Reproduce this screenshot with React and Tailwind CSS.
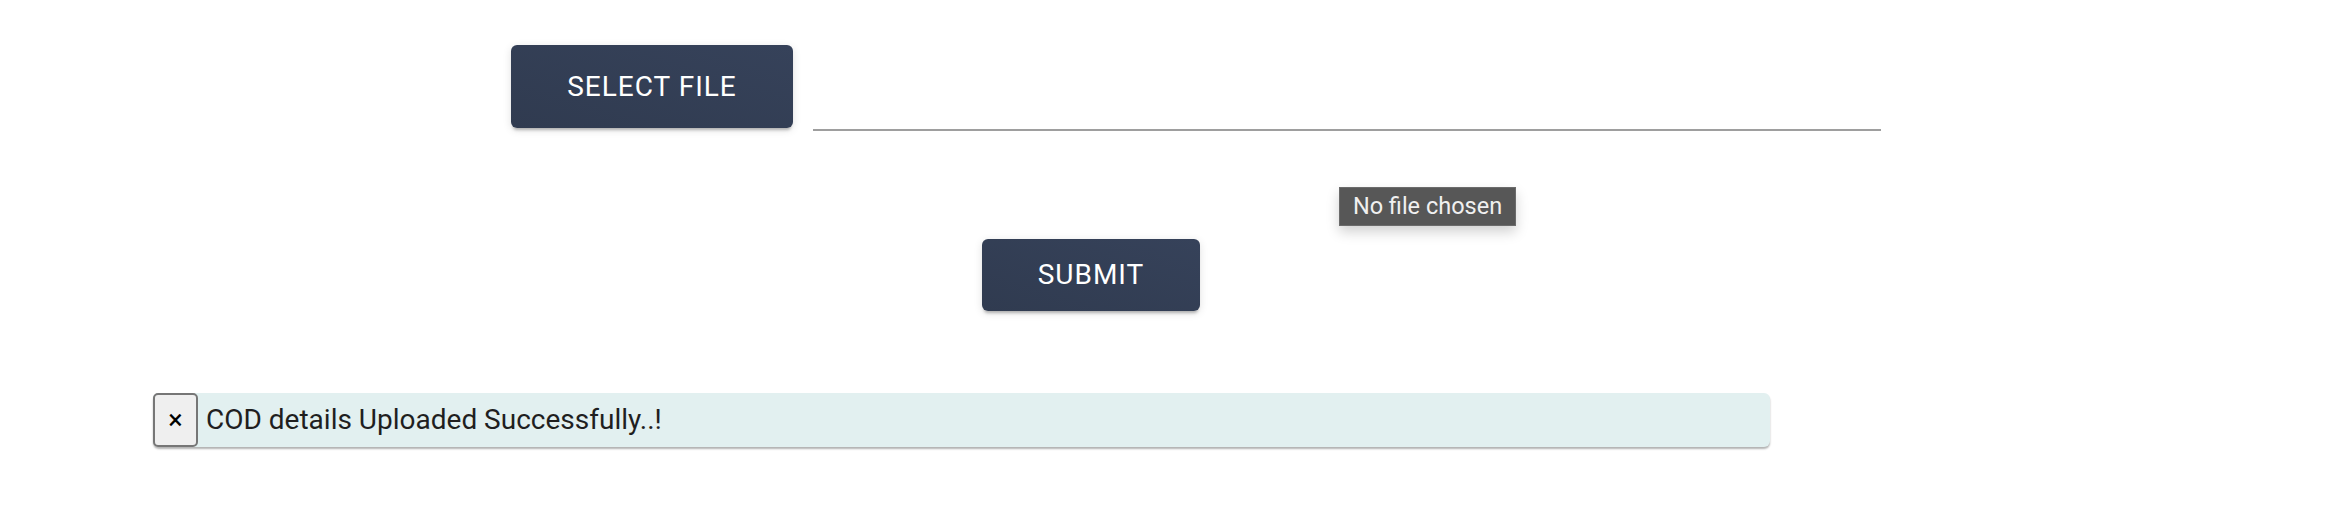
import React from "react";

const font = { fontFamily: "Roboto, 'Liberation Sans', sans-serif" };

const App = () => {
  return (
    <section className="relative w-[2352px] h-[506px] bg-white" style={font}>
      {/* File picker row */}
      <div className="flex items-start pt-[45px] pl-[511px]">
        <button className="w-[282px] h-[83px] rounded-[6px] bg-gradient-to-tr from-[#303b50] to-[#36425a] text-white text-[28px] font-normal tracking-[1px] uppercase shadow-[0_4px_3px_-2px_rgba(0,0,0,0.25),0_2px_8px_rgba(0,0,0,0.12)]">
          Select file
        </button>
        <div className="ml-[20px] mt-[84px] w-[1068px] h-[2px] bg-[#9e9e9e]"></div>
      </div>

      {/* Native tooltip */}
      <div className="absolute left-[1339px] top-[187px] w-[177px] h-[39px] flex items-center justify-center bg-[#575757] border border-[#6b6b6b] text-[#f0f0f0] text-[23.5px] shadow-[0_6px_12px_rgba(0,0,0,0.18)]">
        No file chosen
      </div>

      {/* Submit */}
      <div className="flex pl-[982px] mt-[108px]">
        <button className="w-[218px] h-[72px] rounded-[6px] bg-gradient-to-tr from-[#303b50] to-[#36425a] text-white text-[28px] font-normal tracking-[1px] uppercase shadow-[0_4px_3px_-2px_rgba(0,0,0,0.25),0_2px_8px_rgba(0,0,0,0.12)]">
          Submit
        </button>
      </div>

      {/* Success alert */}
      <div className="flex pl-[153px] mt-[82px]">
        <div className="w-[1617px] h-[54px] flex items-center bg-[#e2f0f0] rounded-[6px] shadow-[0_2px_2px_rgba(0,0,0,0.3)]">
          <button className="w-[45px] h-[54px] shrink-0 flex items-center justify-center bg-[#efefef] border-2 border-[#767676] rounded-[5px] text-[27px] font-normal text-black">
            ×
          </button>
          <span className="ml-[8px] text-[28px] text-[#1f1f1f]">
            COD details Uploaded Successfully..!
          </span>
        </div>
      </div>
    </section>
  );
};

export default App;
